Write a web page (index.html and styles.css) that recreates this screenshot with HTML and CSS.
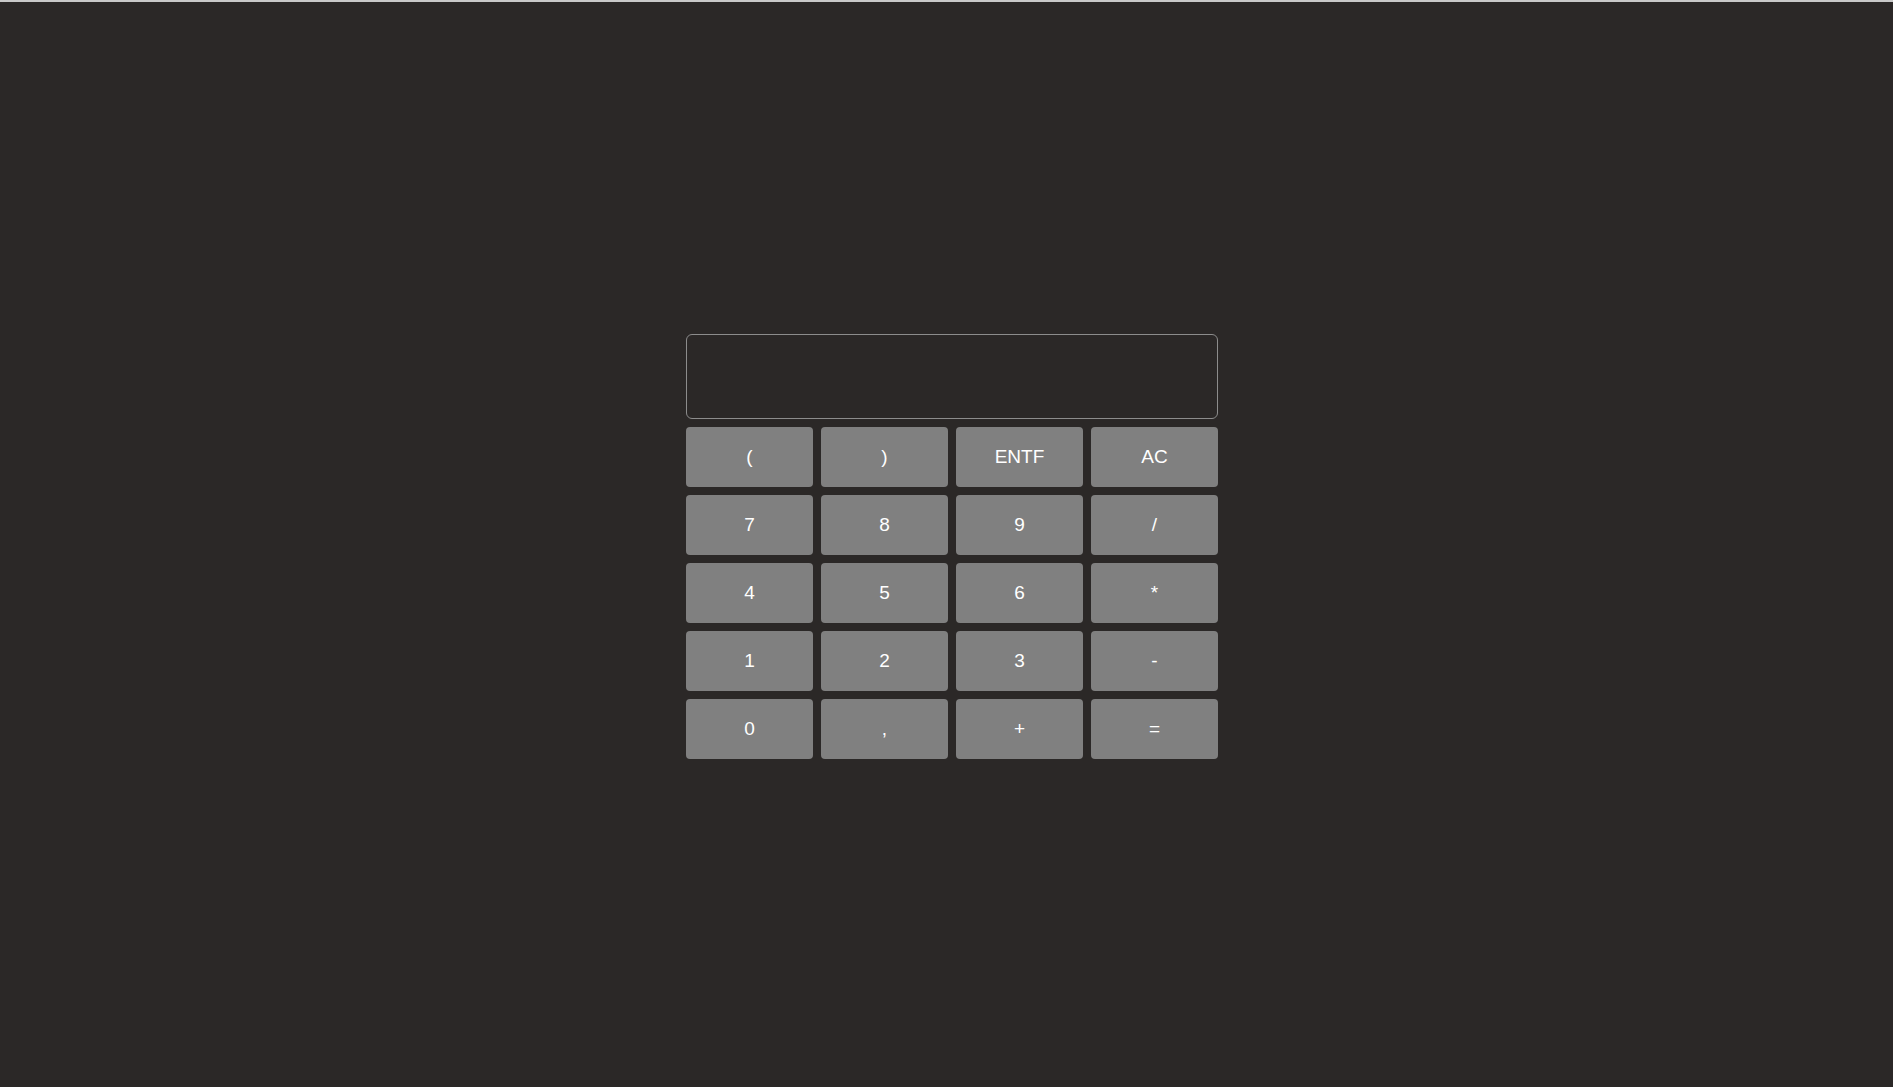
FILE: index.html
```html
<!DOCTYPE html>
<html lang="de">
<head>
<meta charset="utf-8">
<title>Rechner</title>
<link rel="stylesheet" href="styles.css">
</head>
<body>
<div class="page">
  <div class="calc">
    <div class="display"></div>
    <div class="keys">
      <button class="key">(</button>
      <button class="key">)</button>
      <button class="key">ENTF</button>
      <button class="key">AC</button>
      <button class="key">7</button>
      <button class="key">8</button>
      <button class="key">9</button>
      <button class="key">/</button>
      <button class="key">4</button>
      <button class="key">5</button>
      <button class="key">6</button>
      <button class="key">*</button>
      <button class="key">1</button>
      <button class="key">2</button>
      <button class="key">3</button>
      <button class="key">-</button>
      <button class="key">0</button>
      <button class="key">,</button>
      <button class="key">+</button>
      <button class="key">=</button>
    </div>
  </div>
</div>
</body>
</html>
```
FILE: styles.css
```css
html, body {
  margin: 0;
  padding: 0;
  overflow: hidden;
}
body {
  background: #2b2827;
  border-top: 2px solid #c9c9c9;
  font-family: "Liberation Sans", Arial, sans-serif;
}
.page {
  box-sizing: border-box;
  height: calc(100vh - 2px);
  padding: 4px 0 0 11px;
  display: flex;
  justify-content: center;
  align-items: center;
}
.calc {
  width: 532px;
  display: flex;
  flex-direction: column;
  gap: 8px;
}
.display {
  box-sizing: border-box;
  height: 85px;
  border: 1px solid #8c8c8c;
  border-radius: 6px;
  background: #2b2827;
}
.keys {
  display: grid;
  grid-template-columns: repeat(4, 1fr);
  grid-auto-rows: 60px;
  gap: 8px;
}
.key {
  border: none;
  border-radius: 4px;
  background: #808080;
  color: #ffffff;
  font-family: "Liberation Sans", Arial, sans-serif;
  font-size: 19px;
  padding: 0;
  cursor: pointer;
}
```
